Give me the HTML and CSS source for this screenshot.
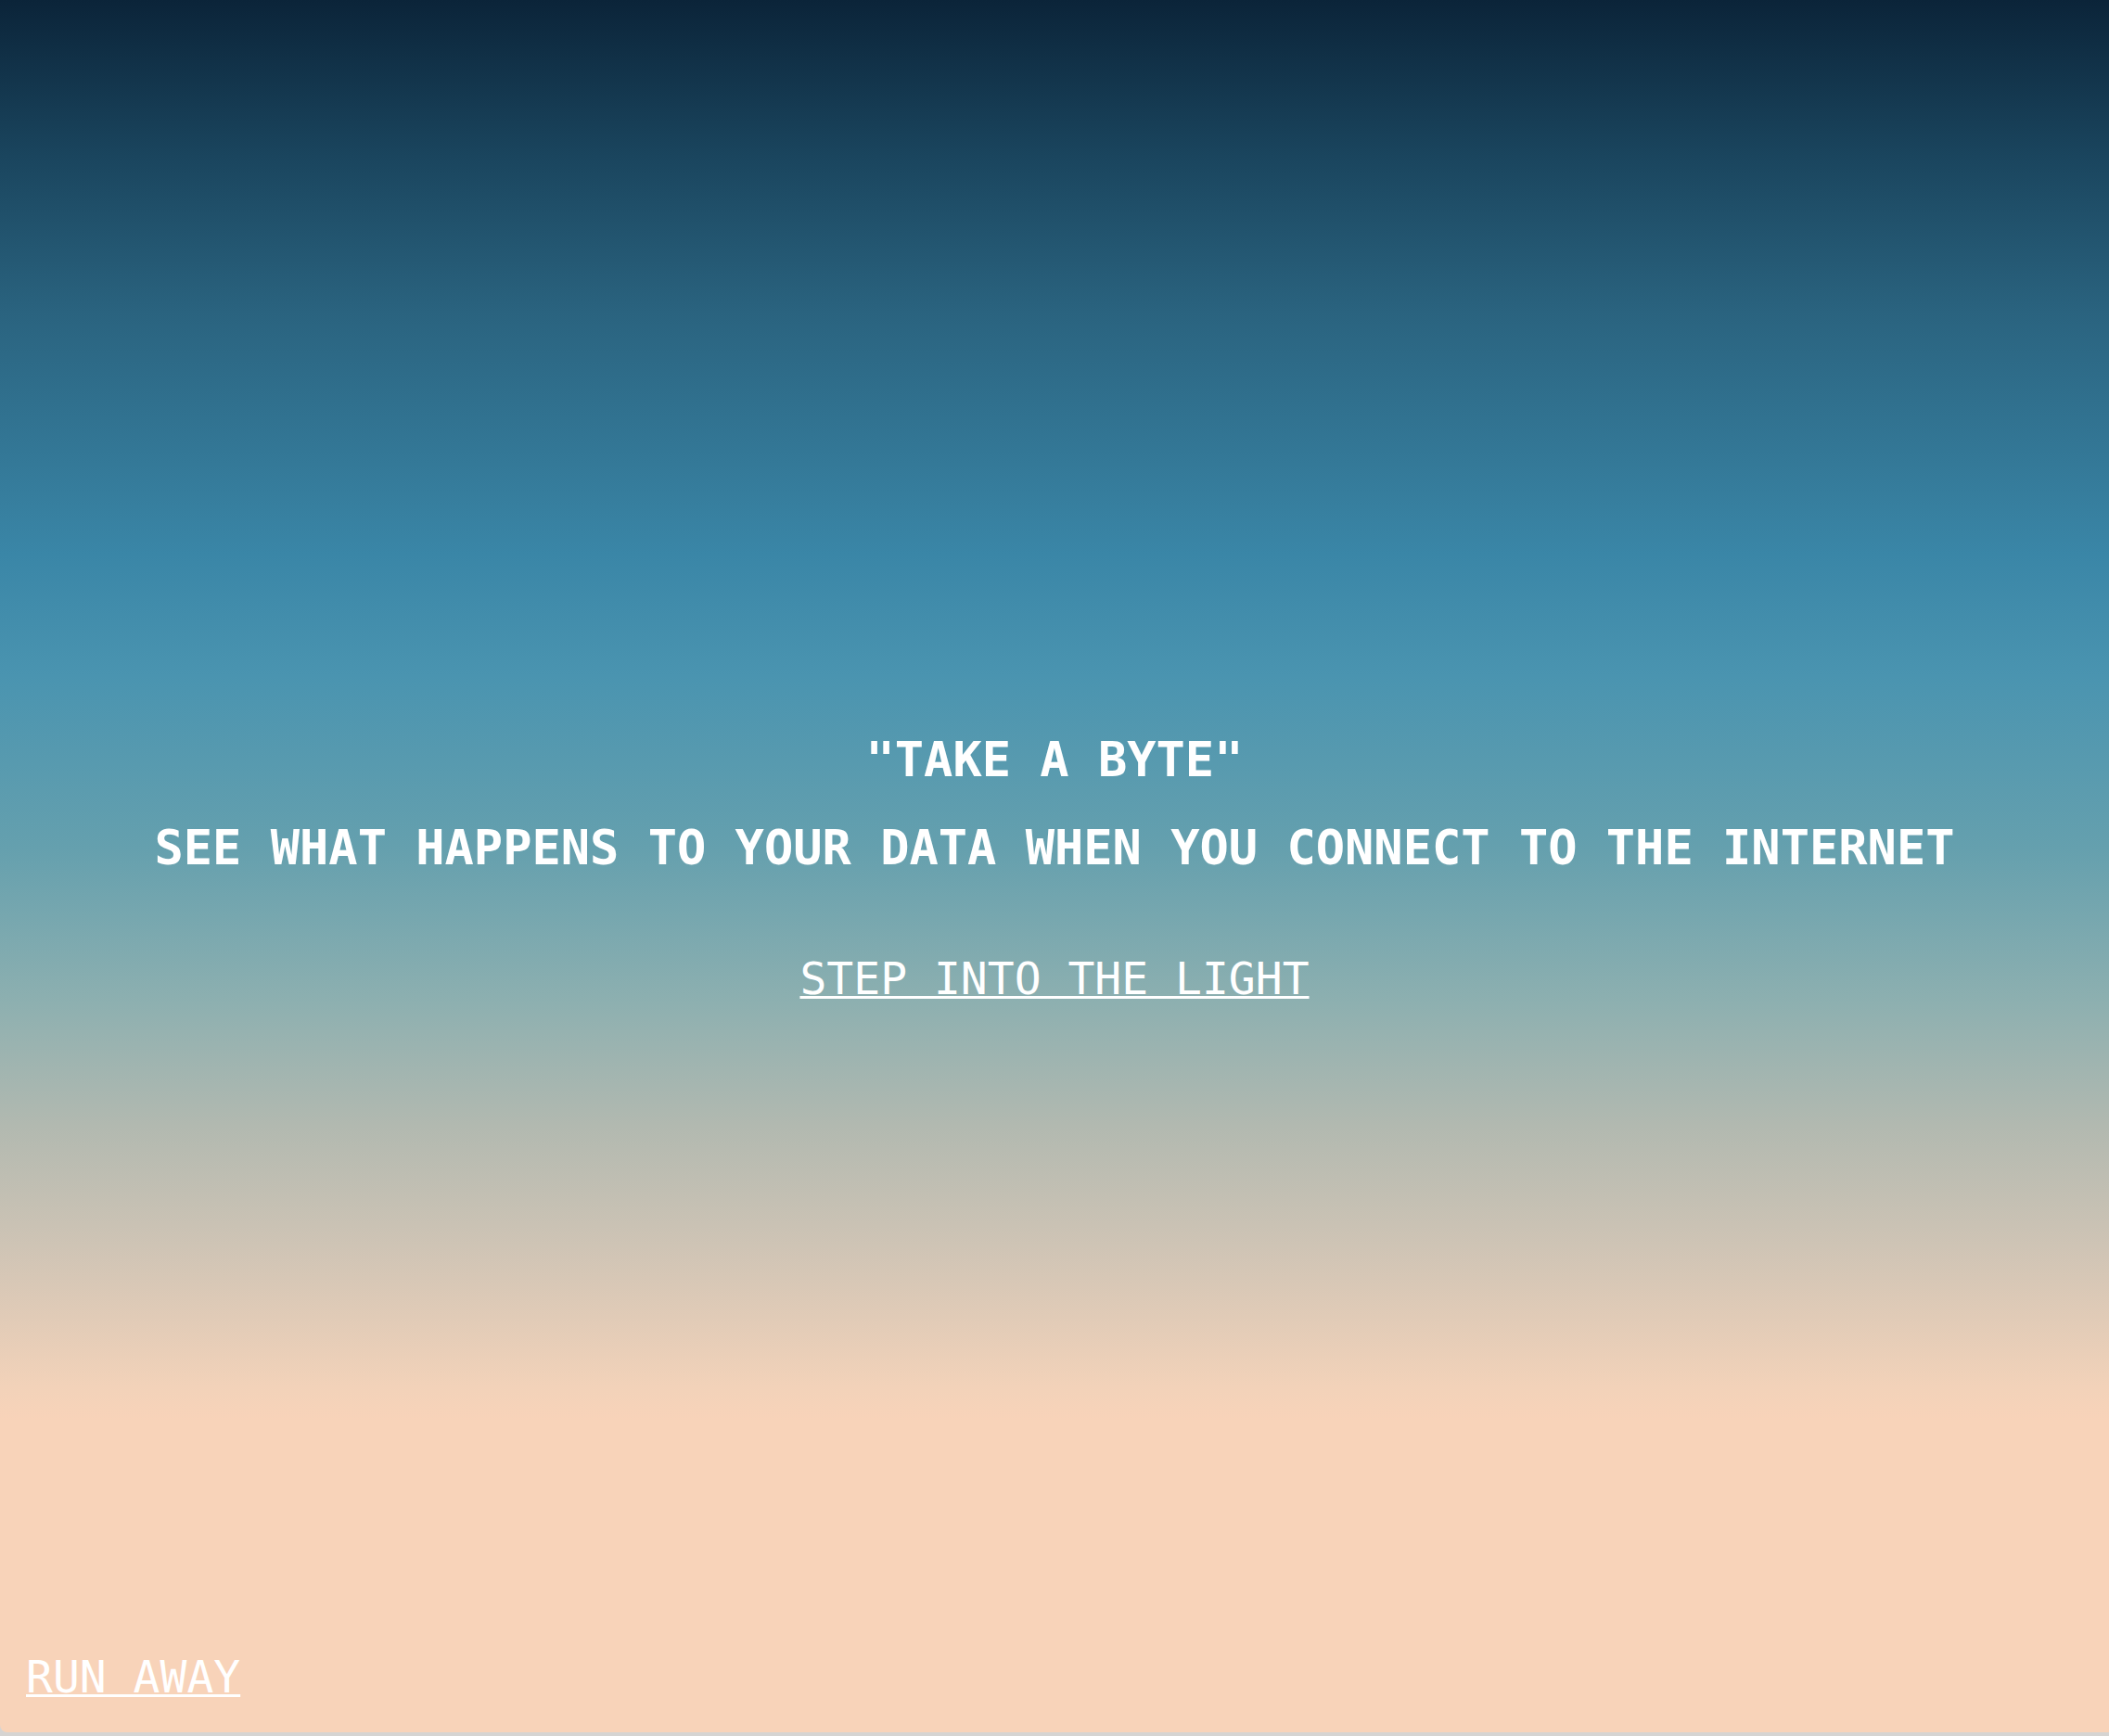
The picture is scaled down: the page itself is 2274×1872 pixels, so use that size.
FILE: index.html
```html
<!DOCTYPE html>
<html lang="en">
<head>
<meta charset="utf-8">
<title>Take a Byte</title>
<link rel="stylesheet" href="styles.css">
</head>
<body>
<div class="page">
  <main class="hero">
    <h1 class="title">"TAKE A BYTE"</h1>
    <h2 class="subtitle">SEE WHAT HAPPENS TO YOUR DATA WHEN YOU CONNECT TO THE INTERNET</h2>
    <a class="enter" href="#">STEP INTO THE LIGHT</a>
  </main>
  <footer class="footer">
    <a class="leave" href="#">RUN AWAY</a>
  </footer>
</div>
</body>
</html>
```

FILE: styles.css
```css
html {
  margin: 0;
  background: #d6d4d2;
}
body {
  margin: 0;
  font-family: "DejaVu Sans Mono", "Liberation Mono", monospace;
  color: #ffffff;
}
.page {
  height: calc(100vh - 4px);
  display: grid;
  grid-template-areas: "stack";
  border-bottom-left-radius: 8px;
  overflow: hidden;
  background: linear-gradient(to bottom,
    #0b2439 0%,
    #1a455e 9%,
    #2a637f 18%,
    #3a86a7 32%,
    #4a94b0 39%,
    #65a0ae 49%,
    #8eb0b0 58%,
    #b2b9b0 65%,
    #cfc4b5 72%,
    #f2d2b9 80%,
    #f8d3b9 82%,
    #f8d3b9 100%);
}
.hero {
  grid-area: stack;
  align-self: center;
  display: flex;
  flex-direction: column;
  align-items: center;
  text-align: center;
  padding-top: 5px;
}
.title,
.subtitle {
  margin: 0;
  font-size: 52px;
  font-weight: bold;
  line-height: 1.2;
}
.subtitle {
  margin-top: 32.6px;
}
.enter {
  margin-top: 82px;
  font-size: 48px;
  line-height: 1.2;
  color: #ffffff;
  text-decoration: underline;
  text-decoration-thickness: 3px;
  text-underline-offset: 2px;
}
.footer {
  grid-area: stack;
  align-self: end;
  justify-self: start;
  display: flex;
  padding: 0 0 30px 28px;
}
.leave {
  font-size: 48px;
  line-height: 1.2;
  color: #ffffff;
  text-decoration: underline;
  text-decoration-thickness: 3px;
  text-underline-offset: 2px;
}
```
